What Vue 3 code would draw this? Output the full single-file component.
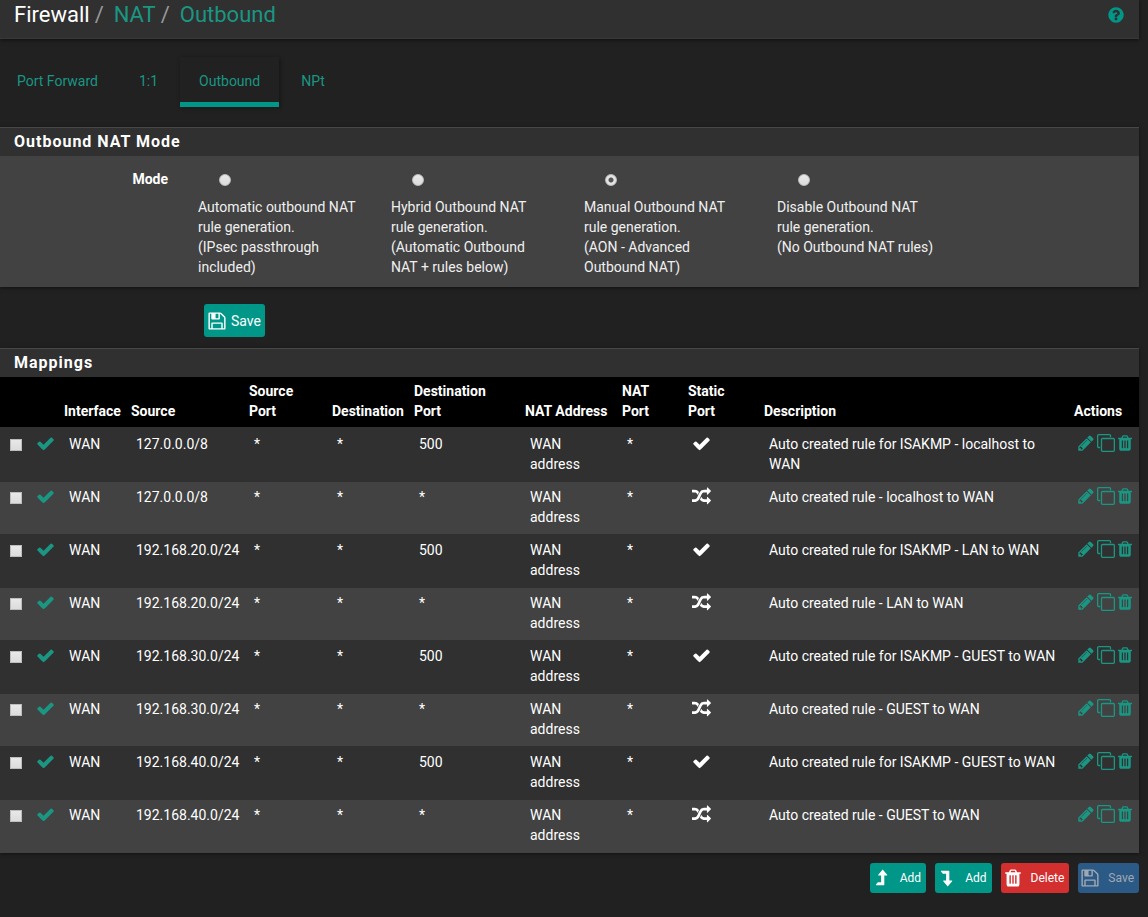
<script setup>
import { ref } from 'vue'

const icons = {
  check: 'M1671 566q0 40-28 68l-724 724-136 136q-28 28-68 28t-68-28l-136-136-362-362q-28-28-28-68t28-68l136-136q28-28 68-28t68 28l294 295 656-657q28-28 68-28t68 28l136 136q28 28 28 68z',
  random: 'M666 481q-60 92-137 273-22-45-37-72.500t-40.500-63.500-51-56.500-63-35-81.500-14.500h-224q-14 0-23-9t-9-23v-192q0-14 9-23t23-9h224q250 0 410 225zm1126 799q0 14-9 23l-320 320q-9 9-23 9-13 0-22.500-9.500t-9.500-22.500v-192q-32 0-85 .5t-81 1-73-1-71-5-64-10.500-63-18.500-58-28.500-59-40-55-53.500-56-69.500q59-93 136-273 22 45 37 72.500t40.500 63.500 51 56.500 63 35 81.500 14.500h256v-192q0-14 9-23t23-9q12 0 24 10l319 319q9 9 9 23zm0-896q0 14-9 23l-320 320q-9 9-23 9-13 0-22.500-9.500t-9.500-22.500v-192h-256q-48 0-87 15t-69 45-51 61.500-45 77.500q-32 62-78 171-29 66-49.500 111t-54 105-64 100-74 83-90 68.500-106.500 42-128 16.500h-224q-14 0-23-9t-9-23v-192q0-14 9-23t23-9h224q48 0 87-15t69-45 51-61.500 45-77.500q32-62 78-171 29-66 49.500-111t54-105 64-100 74-83 90-68.500 106.500-42 128-16.500h256v-192q0-14 9-23t23-9q12 0 24 10l319 319q9 9 9 23z',
  pencil: 'M491 1536l91-91-235-235-91 91v107h128v128h107zm523-928q0-22-22-22-10 0-17 7l-542 542q-7 7-7 17 0 22 22 22 10 0 17-7l542-542q7-7 7-17zm-54-192l416 416-832 832h-416v-416zm683 96q0 53-37 90l-166 166-416-416 166-165q36-38 90-38 53 0 91 38l235 234q37 39 37 91z',
  clone: 'M1664 1632v-1088q0-13-9.500-22.500t-22.500-9.500h-1088q-13 0-22.500 9.500t-9.500 22.500v1088q0 13 9.500 22.500t22.500 9.500h1088q13 0 22.500-9.500t9.500-22.500zm128-1088v1088q0 66-47 113t-113 47h-1088q-66 0-113-47t-47-113v-1088q0-66 47-113t113-47h1088q66 0 113 47t47 113zm-384-384v160h-128v-160q0-13-9.500-22.500t-22.500-9.500h-1088q-13 0-22.500 9.500t-9.500 22.500v1088q0 13 9.500 22.500t22.500 9.500h160v128h-160q-66 0-113-47t-47-113v-1088q0-66 47-113t113-47h1088q66 0 113 47t47 113z',
  trash: 'M704 1376v-704q0-14-9-23t-23-9h-64q-14 0-23 9t-9 23v704q0 14 9 23t23 9h64q14 0 23-9t9-23zm256 0v-704q0-14-9-23t-23-9h-64q-14 0-23 9t-9 23v704q0 14 9 23t23 9h64q14 0 23-9t9-23zm256 0v-704q0-14-9-23t-23-9h-64q-14 0-23 9t-9 23v704q0 14 9 23t23 9h64q14 0 23-9t9-23zm-544-992h448l-48-117q-7-9-17-11h-317q-10 2-17 11zm928 32v64q0 14-9 23t-23 9h-96v948q0 83-47 143.500t-113 60.500h-832q-66 0-113-58.500t-47-141.500v-952h-96q-14 0-23-9t-9-23v-64q0-14 9-23t23-9h309l70-167q15-37 54-63t79-26h320q40 0 79 26t54 63l70 167h309q14 0 23 9t9 23z',
  save: 'M512 1536h768v-384h-768v384zm896 0h128v-896q0-14-10-38.500t-20-34.500l-281-281q-10-10-34-20t-39-10v416q0 40-28 68t-68 28h-576q-40 0-68-28t-28-68v-416h-128v1280h128v-416q0-40 28-68t68-28h832q40 0 68 28t28 68v416zm-384-928v-320q0-13-9.500-22.500t-22.500-9.500h-192q-13 0-22.500 9.500t-9.500 22.500v320q0 13 9.500 22.500t22.500 9.500h192q13 0 22.500-9.500t9.500-22.500zm640 32v928q0 40-28 68t-68 28h-1344q-40 0-68-28t-28-68v-1344q0-40 28-68t68-28h928q40 0 88 20t76 48l280 280q28 28 48 76t20 88z',
  help: 'M1024 1376v-192q0-14-9-23t-23-9h-192q-14 0-23 9t-9 23v192q0 14 9 23t23 9h192q14 0 23-9t9-23zm256-672q0-88-55.500-163t-138.500-116-170-41q-243 0-371 213-15 24 8 42l132 100q7 6 19 6 16 0 25-12 53-68 86-92 34-24 86-24 48 0 85.500 26t37.500 59q0 38-20 61t-68 45q-63 28-115.500 86.500t-52.500 125.500v36q0 14 9 23t23 9h192q14 0 23-9t9-23q0-19 21.500-49.500t54.500-49.500q32-18 49-28.500t46-35 44.500-48 28-60.500 12.500-81zm384 192q0 209-103 385.500t-279.500 279.500-385.500 103-385.500-103-279.500-279.500-103-385.500 103-385.500 279.500-279.500 385.500-103 385.500 103 279.500 279.500 103 385.500z',
  up: 'M960 128L1360 600Q1390 660 1328 672H1104V1504Q1104 1536 1072 1536H368Q330 1530 350 1490L500 1310Q520 1280 550 1280H816V672H592Q530 660 560 600Z',
  down: 'M960 1664L1360 1192Q1390 1132 1328 1120H1104V288Q1104 256 1072 256H368Q330 262 350 302L500 482Q520 512 550 512H816V1120H592Q530 1132 560 1192Z'
}

const tabs = ['Port Forward', '1:1', 'Outbound', 'NPt']
const mode = ref('manual')
const modes = [
  { id: 'automatic', lead: 'Automatic outbound NAT rule generation.', note: '(IPsec passthrough included)' },
  { id: 'hybrid', lead: 'Hybrid Outbound NAT rule generation.', note: '(Automatic Outbound NAT + rules below)' },
  { id: 'manual', lead: 'Manual Outbound NAT rule generation.', note: '(AON - Advanced Outbound NAT)' },
  { id: 'disabled', lead: 'Disable Outbound NAT rule generation.', note: '(No Outbound NAT rules)' }
]

const rules = [
  ['127.0.0.0/8', true, 'Auto created rule for ISAKMP - localhost to WAN'],
  ['127.0.0.0/8', false, 'Auto created rule - localhost to WAN'],
  ['192.168.20.0/24', true, 'Auto created rule for ISAKMP - LAN to WAN'],
  ['192.168.20.0/24', false, 'Auto created rule - LAN to WAN'],
  ['192.168.30.0/24', true, 'Auto created rule for ISAKMP - GUEST to WAN'],
  ['192.168.30.0/24', false, 'Auto created rule - GUEST to WAN'],
  ['192.168.40.0/24', true, 'Auto created rule for ISAKMP - GUEST to WAN'],
  ['192.168.40.0/24', false, 'Auto created rule - GUEST to WAN']
].map(([source, isStatic, description]) => ({ source, isStatic, description }))
</script>

<template>
  <div class="page">
    <header class="topbar">
      <nav class="crumbs" aria-label="Breadcrumb">
        <span>Firewall</span><i>/</i><a href="#">NAT</a><i>/</i><a href="#">Outbound</a>
      </nav>
      <a href="#" class="help" aria-label="Help">
        <svg viewBox="0 0 1792 1792"><path :d="icons.help" /></svg>
      </a>
    </header>

    <nav class="tabs" aria-label="NAT sections">
      <a v-for="t in tabs" :key="t" href="#" :class="{ active: t === 'Outbound' }">{{ t }}</a>
    </nav>

    <form @submit.prevent>
      <section class="panel">
        <h2>Outbound NAT Mode</h2>
        <div class="modes" role="radiogroup" aria-labelledby="mode-label">
          <strong id="mode-label">Mode</strong>
          <label v-for="m in modes" :key="m.id" class="mode">
            <input v-model="mode" type="radio" name="mode" :value="m.id" />
            <span>{{ m.lead }}<br />{{ m.note }}</span>
          </label>
        </div>
      </section>
      <button type="submit" class="btn save-mode">
        <svg viewBox="0 0 1792 1792"><path :d="icons.save" /></svg>Save
      </button>
    </form>

    <section class="panel">
      <h2>Mappings</h2>
      <table>
        <colgroup>
          <col class="c-select" /><col class="c-state" /><col class="c-if" /><col class="c-src" />
          <col class="c-sport" /><col class="c-dst" /><col class="c-dport" /><col class="c-addr" />
          <col class="c-nport" /><col class="c-static" /><col /><col class="c-actions" />
        </colgroup>
        <thead>
          <tr>
            <th></th><th></th><th>Interface</th><th>Source</th><th>Source<br />Port</th><th>Destination</th>
            <th>Destination<br />Port</th><th>NAT Address</th><th>NAT<br />Port</th><th>Static<br />Port</th>
            <th>Description</th><th>Actions</th>
          </tr>
        </thead>
        <tbody>
          <tr v-for="(r, i) in rules" :key="i">
            <td class="select"><input type="checkbox" :aria-label="`Select rule ${i + 1}`" /></td>
            <td class="state"><a href="#" aria-label="Enabled"><svg viewBox="0 0 1792 1792"><path :d="icons.check" /></svg></a></td>
            <td>WAN</td>
            <td>{{ r.source }}</td>
            <td>*</td>
            <td>*</td>
            <td>{{ r.isStatic ? '500' : '*' }}</td>
            <td>WAN<br />address</td>
            <td>*</td>
            <td class="static"><svg viewBox="0 0 1792 1792"><path :d="r.isStatic ? icons.check : icons.random" /></svg></td>
            <td>{{ r.description }}</td>
            <td class="actions">
              <div>
                <a href="#" aria-label="Edit"><svg viewBox="0 0 1792 1792"><path :d="icons.pencil" /></svg></a>
                <a href="#" aria-label="Copy"><svg viewBox="0 0 1792 1792"><path :d="icons.clone" /></svg></a>
                <a href="#" aria-label="Delete"><svg viewBox="192 0 1408 1792"><path :d="icons.trash" /></svg></a>
              </div>
            </td>
          </tr>
        </tbody>
      </table>
    </section>

    <div class="toolbar">
      <button type="button" class="btn small"><svg viewBox="0 0 1792 1792"><path :d="icons.up" /></svg>Add</button>
      <button type="button" class="btn small"><svg viewBox="0 0 1792 1792"><path :d="icons.down" /></svg>Add</button>
      <button type="button" class="btn small danger"><svg viewBox="0 0 1792 1792"><path :d="icons.trash" /></svg>Delete</button>
      <button type="button" class="btn small primary" disabled><svg viewBox="0 0 1792 1792"><path :d="icons.save" /></svg>Save</button>
    </div>
  </div>
</template>

<style>
body {
  margin: 0;
  background: #212121;
}
</style>

<style scoped>
.page {
  padding-right: 9px;
  font: 14px/20px Roboto, "Liberation Sans", sans-serif;
  color: #fff;
}
.page * {
  box-sizing: border-box;
}
a {
  color: #1a9683;
  text-decoration: none;
}
svg {
  display: block;
  fill: currentColor;
}
.topbar {
  display: flex;
  justify-content: space-between;
  align-items: flex-start;
  height: 39px;
  padding: 0 14px;
  background: #303030;
  border-bottom: 1px solid #383838;
  box-shadow: 0 1px 4px rgba(0, 0, 0, 0.6);
}
.crumbs {
  display: flex;
  font-size: 22px;
  line-height: 30px;
}
.crumbs i {
  padding: 0 10px 0 5px;
  font-style: normal;
  color: #999;
}
.help {
  padding-top: 6px;
  color: #009688;
}
.help svg {
  width: 18px;
  height: 18px;
}
.tabs {
  display: flex;
  gap: 3px;
  padding-top: 18px;
  margin-bottom: 20px;
}
.tabs a {
  padding: 14px 19px 11px;
  border-bottom: 5px solid transparent;
}
.tabs a:first-child {
  padding-left: 17px;
}
.tabs a.active {
  border-color: #009688;
  box-shadow: 1px 1px 4px rgba(0, 0, 0, 0.4);
}
.panel {
  box-shadow: 0 1px 4px rgba(0, 0, 0, 0.5);
}
h2 {
  margin: 0;
  padding: 4px 14px;
  border-top: 1px solid #484848;
  background: #303030;
  font-size: 16px;
  font-weight: 700;
  line-height: 20px;
  letter-spacing: 1px;
}
.modes {
  display: grid;
  grid-template-columns: 168px repeat(4, minmax(0, 193px));
  padding: 13px 0 10px;
  background: #424242;
  color: #f0f0f0;
}
.modes strong {
  text-align: right;
  color: #fff;
}
.mode {
  padding: 5px 0 0 30px;
}
.mode span {
  display: block;
  padding-right: 2px;
}
input {
  appearance: none;
  display: block;
  width: 12px;
  height: 12px;
  margin: 0;
  border: 1px solid #bdbdbd;
  background: linear-gradient(#e8e8e8, #dcdcdc);
}
input[type='radio'] {
  margin: 0 0 11px 21px;
  border-radius: 50%;
}
input[type='radio']:checked {
  background: radial-gradient(circle, #555 0 2px, #e4e4e4 3px);
}
input[type='checkbox']:checked {
  background: #009688;
}
.btn {
  display: flex;
  align-items: center;
  border: 0;
  border-radius: 3px;
  background: #009688;
  color: #fff;
  font-family: inherit;
  font-size: 14px;
  line-height: 20px;
}
.btn svg {
  width: 20px;
  height: 20px;
}
.save-mode {
  height: 33px;
  margin: 17px 0 11px 204px;
  padding: 0 4px 0 3px;
  gap: 4px;
}
table {
  width: 100%;
  table-layout: fixed;
  border-spacing: 0;
}
.c-select { width: 32px; }
.c-state { width: 27px; }
.c-if { width: 67px; }
.c-src { width: 118px; }
.c-sport { width: 83px; }
.c-dst { width: 82px; }
.c-dport { width: 111px; }
.c-addr { width: 97px; }
.c-nport { width: 66px; }
.c-static { width: 76px; }
.c-actions { width: 70px; }
th {
  padding: 4px 0 6px 5px;
  background: #000;
  border-bottom: 2px solid #303030;
  font-weight: 700;
  text-align: left;
  vertical-align: bottom;
}
td {
  padding: 5px 10px 8px;
  background: #303030;
  vertical-align: top;
}
td:nth-child(4) {
  padding-right: 0;
}
tr:nth-child(even) td {
  padding-bottom: 7px;
  border-bottom: 1px solid #303030;
  background: #424242;
}
tbody tr:last-child td {
  border-bottom-color: #424242;
}
.select input {
  margin-top: 5px;
}
.state,
td.actions {
  padding-left: 4px;
  padding-right: 0;
}
.state svg,
.static svg {
  width: 19px;
  height: 19px;
}
td.static {
  padding-left: 9px;
}
.actions div {
  display: flex;
  align-items: center;
  gap: 2px;
  padding-left: 4px;
}
.actions svg {
  width: 18px;
  height: 18px;
}
.actions a:last-child svg {
  width: 16px;
}
.toolbar {
  display: flex;
  justify-content: flex-end;
  gap: 9px;
  padding: 10px 0 24px;
}
.small {
  height: 30px;
  padding: 0 5px 0 2px;
  gap: 8px;
  font-size: 12px;
}
.danger {
  background: #d32f2f;
}
.primary {
  background: #2b5a87;
  color: #a0a8b0;
}
</style>
